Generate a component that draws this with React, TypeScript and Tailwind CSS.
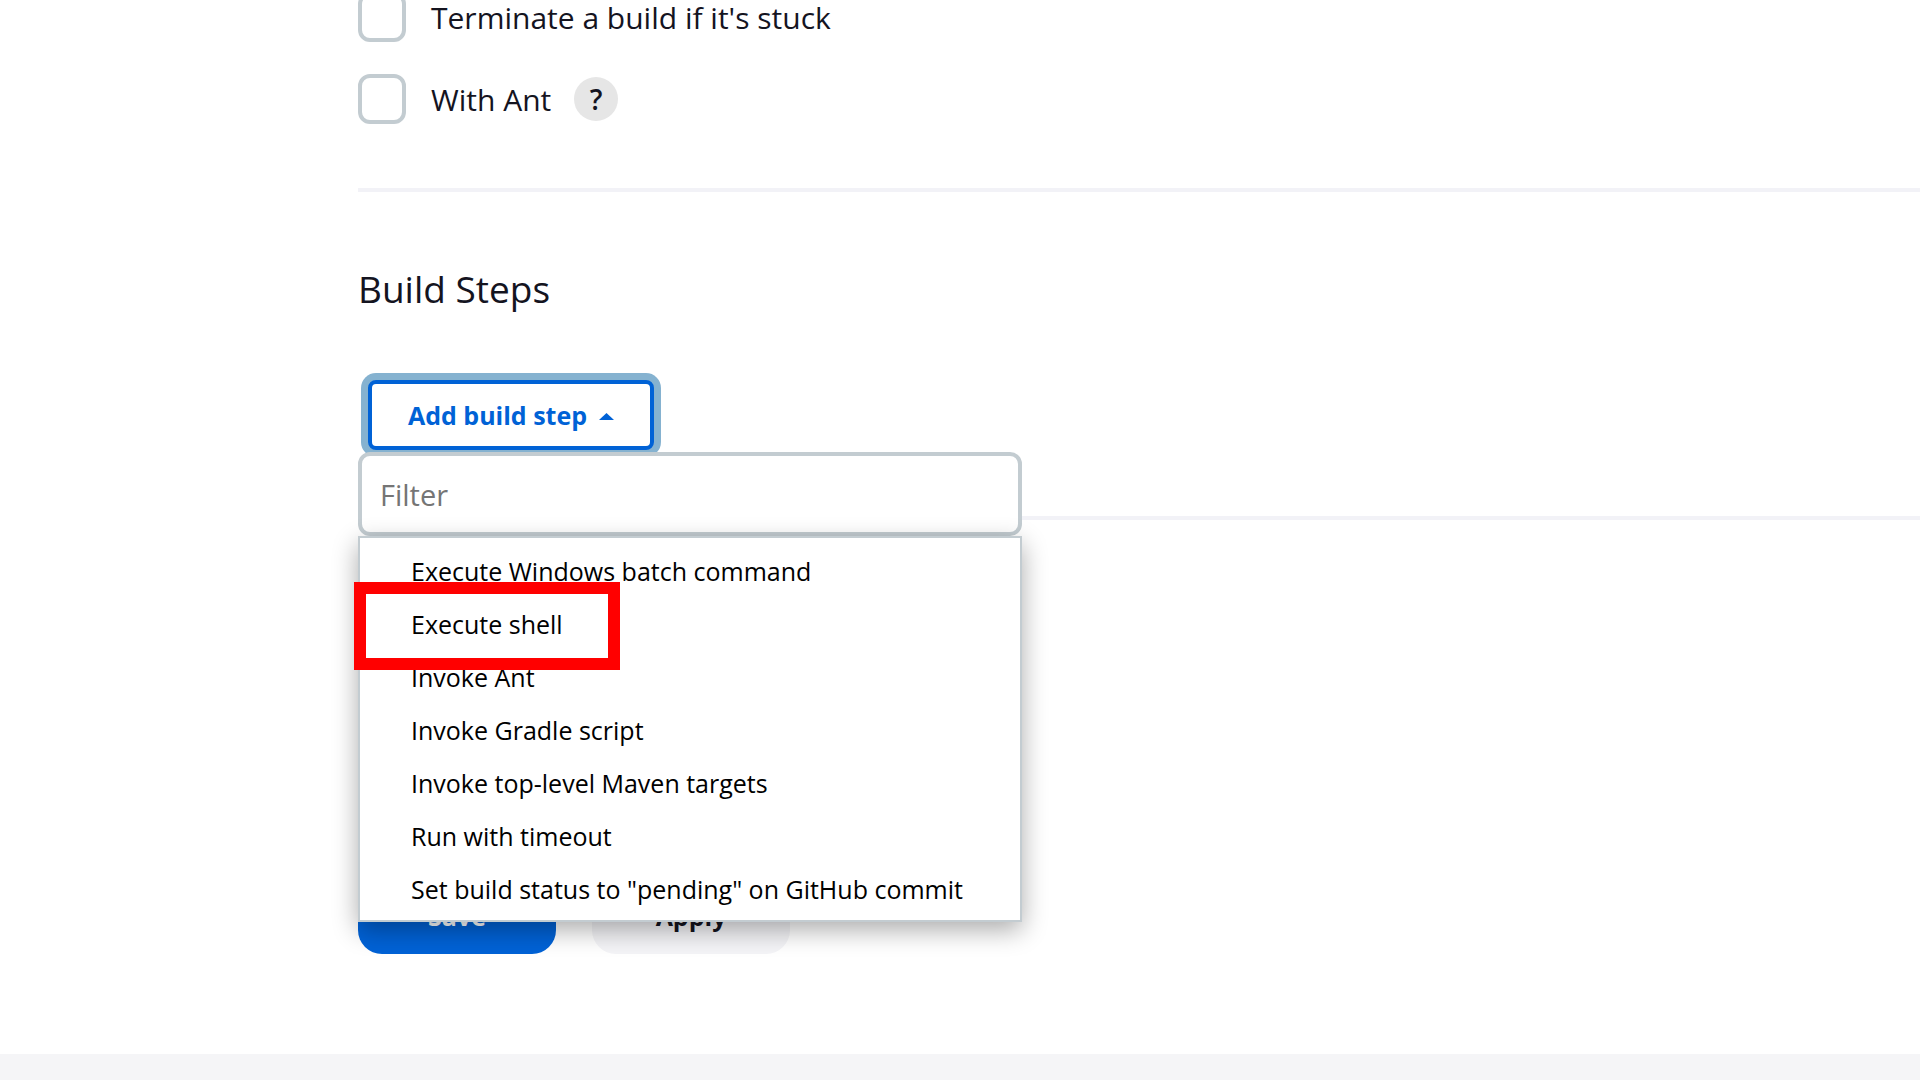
import { useState } from "react";

const steps = [
  "Execute Windows batch command",
  "Execute shell",
  "Invoke Ant",
  "Invoke Gradle script",
  "Invoke top-level Maven targets",
  "Run with timeout",
  'Set build status to "pending" on GitHub commit',
];

function Option({ id, label, help }: { id: string; label: string; help?: boolean }) {
  return (
    <div className="flex h-[50px] items-center">
      <input
        id={id}
        type="checkbox"
        className="h-[50px] w-12 appearance-none rounded-xl border-4 border-[#c3ccd1] bg-white checked:bg-[#0062d6]"
      />
      <label htmlFor={id} className="pt-0.5 pl-[25px] text-[30px] leading-10 font-medium">
        {label}
      </label>
      {help && (
        <button
          type="button"
          aria-label={`Help for ${label}`}
          className="ml-[23px] size-11 rounded-full bg-[#e6e6e6] text-[28px] leading-10 font-semibold"
        >
          ?
        </button>
      )}
    </div>
  );
}

export default function App() {
  const [filter, setFilter] = useState("");
  const shown = steps.filter((s) => s.toLowerCase().includes(filter.toLowerCase()));

  return (
    <div className="flex min-h-screen flex-col overflow-hidden bg-white font-['Open_Sans',sans-serif] text-[#14141f]">
      <main className="-mt-2 grow pl-[358px]">
        <section className="flex flex-col gap-8">
          <Option id="terminate" label="Terminate a build if it's stuck" />
          <Option id="ant" label="With Ant" help />
        </section>

        <hr className="mt-16 border-t-4 border-[#f2f2f7]" />

        <section className="pt-[72px]">
          <h2 className="text-[37px] leading-[50px] font-medium">Build Steps</h2>
          <div className="relative mt-[66px] ml-[10px] w-fit">
            <button
              type="button"
              aria-expanded="true"
              className="flex h-[70px] w-[286px] items-center justify-center gap-3 rounded-lg border-4 border-[#0062d6] bg-white pt-0.5 text-[25px] font-bold text-[#0062d6] ring-7 ring-[#85b2d0]"
            >
              Add build step
              <svg width="15" height="7" viewBox="0 0 15 7" aria-hidden="true">
                <path d="M0 7 7.5 0 15 7z" fill="currentColor" />
              </svg>
            </button>

            <div className="absolute top-[72px] -left-[10px] z-10 w-[664px]">
              <input
                type="text"
                aria-label="Filter"
                placeholder="Filter"
                value={filter}
                onChange={(e) => setFilter(e.target.value)}
                className="block h-[84px] w-full rounded-xl border-4 border-[#c3ccd1] bg-white px-[18px] text-[29px] placeholder:text-[#757575]"
              />
              <ul className="relative border-2 border-[#c3ccd1] bg-white pt-[7px] pb-1 text-[25px] text-black shadow-[0_8px_24px_rgba(0,0,0,0.33)]">
                {shown.map((s) => (
                  <li key={s} className="relative">
                    <button type="button" className="block h-[53px] w-full pl-[51px] text-left">
                      {s}
                    </button>
                    {s === "Execute shell" && (
                      <span className="pointer-events-none absolute -top-4 -left-[6px] z-10 h-[88px] w-[266px] border-12 border-[#ff0000]" />
                    )}
                  </li>
                ))}
              </ul>
            </div>
          </div>
        </section>

        <hr className="mt-[66px] border-t-4 border-[#f2f2f7]" />

        <div className="mt-[360px] mb-[100px] flex gap-9 text-[25px] font-bold">
          <button type="button" className="h-[74px] w-[198px] rounded-3xl bg-[#0062d6] text-white">
            Save
          </button>
          <button type="button" className="h-[74px] w-[198px] rounded-3xl bg-[#f4f4f7]">
            Apply
          </button>
        </div>
      </main>
      <footer className="h-[26px] bg-[#f5f5f7]" />
    </div>
  );
}
